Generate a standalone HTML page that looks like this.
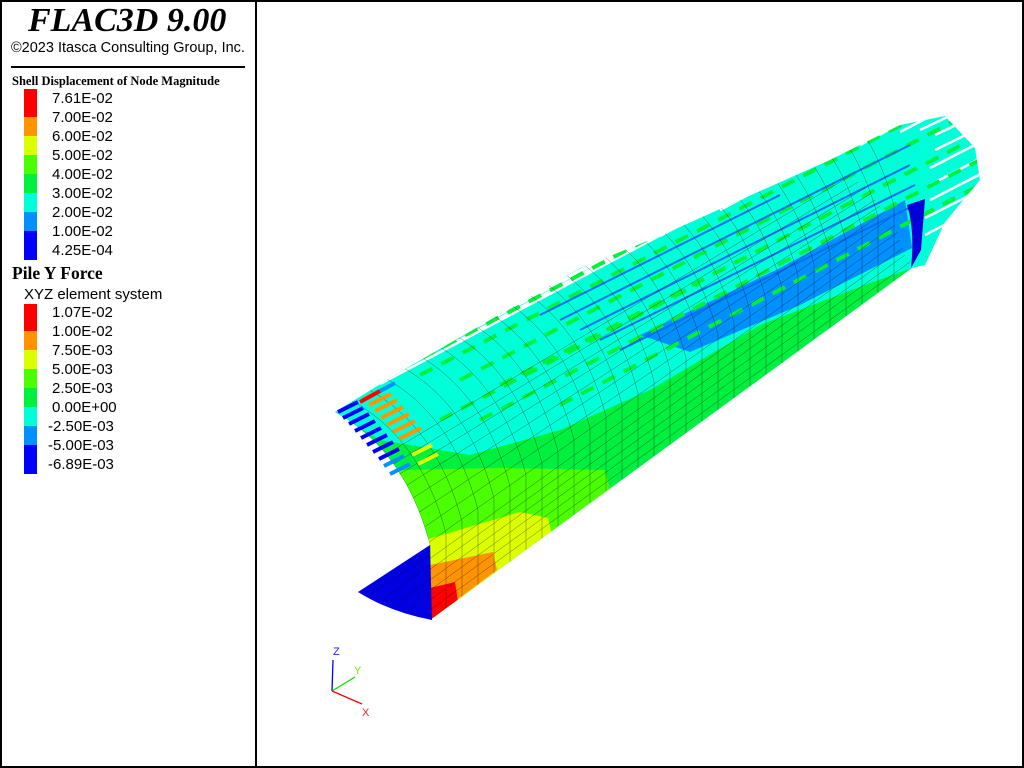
<!DOCTYPE html>
<html><head><meta charset="utf-8"><style>
html,body{margin:0;padding:0;background:#fff}
#w{position:relative;width:1024px;height:768px;overflow:hidden;background:#fff}
.t{position:absolute;font-family:"Liberation Sans",sans-serif;font-size:15px;color:#000;white-space:nowrap;line-height:19px}
.s{position:absolute;left:24px;width:13px}
</style></head><body><div id="w">
<div style="position:absolute;left:0;top:0;width:1020px;height:764px;border:2px solid #000"></div>
<div style="position:absolute;left:255px;top:0;width:2px;height:768px;background:#000"></div>
<div class="t" style="left:28px;top:1px;font-family:'Liberation Serif',serif;font-style:italic;font-weight:bold;font-size:34px;line-height:40px">FLAC3D 9.00</div>
<div class="t" style="left:11px;top:39px;font-size:14.5px;line-height:18px">©2023 Itasca Consulting Group, Inc.</div>
<div style="position:absolute;left:11px;top:66px;width:234px;height:2px;background:#000"></div>
<div class="t" style="left:12px;top:74px;font-family:'Liberation Serif',serif;font-weight:bold;font-size:12.5px;line-height:15px">Shell Displacement of Node Magnitude</div>
<div class="s" style="top:89px;height:28px;background:#ff0000"></div>
<div class="s" style="top:117px;height:19px;background:#ff9400"></div>
<div class="s" style="top:136px;height:19px;background:#dcff00"></div>
<div class="s" style="top:155px;height:19px;background:#4cff00"></div>
<div class="s" style="top:174px;height:19px;background:#00f040"></div>
<div class="s" style="top:193px;height:19px;background:#00ffd8"></div>
<div class="s" style="top:212px;height:19px;background:#0090ff"></div>
<div class="s" style="top:231px;height:29px;background:#0000ff"></div>
<div class="t" style="left:52px;top:89px">7.61E-02</div>
<div class="t" style="left:52px;top:108px">7.00E-02</div>
<div class="t" style="left:52px;top:127px">6.00E-02</div>
<div class="t" style="left:52px;top:146px">5.00E-02</div>
<div class="t" style="left:52px;top:165px">4.00E-02</div>
<div class="t" style="left:52px;top:184px">3.00E-02</div>
<div class="t" style="left:52px;top:203px">2.00E-02</div>
<div class="t" style="left:52px;top:222px">1.00E-02</div>
<div class="t" style="left:52px;top:241px">4.25E-04</div>
<div class="t" style="left:12px;top:262px;font-family:'Liberation Serif',serif;font-weight:bold;font-size:17.5px;line-height:22px">Pile Y Force</div>
<div class="t" style="left:24px;top:285px">XYZ element system</div>
<div class="s" style="top:304px;height:27px;background:#ff0000"></div>
<div class="s" style="top:331px;height:19px;background:#ff9400"></div>
<div class="s" style="top:350px;height:19px;background:#dcff00"></div>
<div class="s" style="top:369px;height:19px;background:#4cff00"></div>
<div class="s" style="top:388px;height:19px;background:#00f040"></div>
<div class="s" style="top:407px;height:19px;background:#00ffd8"></div>
<div class="s" style="top:426px;height:19px;background:#0090ff"></div>
<div class="s" style="top:445px;height:29px;background:#0000ff"></div>
<div class="t" style="left:52px;top:303px">1.07E-02</div>
<div class="t" style="left:52px;top:322px">1.00E-02</div>
<div class="t" style="left:52px;top:341px">7.50E-03</div>
<div class="t" style="left:52px;top:360px">5.00E-03</div>
<div class="t" style="left:52px;top:379px">2.50E-03</div>
<div class="t" style="left:52px;top:398px">0.00E+00</div>
<div class="t" style="left:48px;top:417px">-2.50E-03</div>
<div class="t" style="left:48px;top:436px">-5.00E-03</div>
<div class="t" style="left:48px;top:455px">-6.89E-03</div>

<svg width="1024" height="768" style="position:absolute;left:0;top:0">
<defs>
<clipPath id="body"><path d="M335,412 L400,372 L580,268 L660,236 L740,200 L830,160 L900,125 L945,116 L975,148 L980,180 L945,222 L925,265 L912,268 L430,620 L430,545 Q405,450 335,412 Z"/></clipPath>
</defs>
<g clip-path="url(#body)">
<rect x="300" y="100" width="700" height="540" fill="#00ffd8"/>
<path d="M640,335 L780,268 L905,200 L912,248 L800,305 L690,352 Z" fill="#0090ff"/>
<path d="M335,412 L380,440 L470,455 L560,430 L650,390 L760,325 L870,283 L912,268 L430,620 Z" fill="#00f040"/>
<path d="M395,470 L500,468 L605,470 L610,490 L430,620 Z" fill="#4cff00"/>
<path d="M425,540 L520,512 L548,518 L552,535 L430,620 Z" fill="#dcff00"/>
<path d="M430,565 L493,552 L497,570 L430,620 Z" fill="#ff9400"/>
<path d="M430,588 L455,582 L458,602 L432,620 Z" fill="#ff0000"/>
<g stroke="#fff" stroke-width="2.5">
<line x1="330" y1="405" x2="960" y2="70"/>
<line x1="360" y1="388" x2="990" y2="52"/>
<line x1="380" y1="384" x2="1000" y2="55"/>
<line x1="450" y1="345" x2="1000" y2="50"/>
<line x1="520" y1="302" x2="1000" y2="46"/>
<line x1="600" y1="262" x2="1000" y2="48"/>
<line x1="660" y1="236" x2="1000" y2="54"/>
<line x1="720" y1="210" x2="1000" y2="60"/>
<line x1="780" y1="180" x2="1000" y2="66"/>
<line x1="860" y1="145" x2="1000" y2="72"/>
<line x1="900" y1="132" x2="1000" y2="80"/>
<line x1="920" y1="130" x2="1000" y2="92"/>
<line x1="935" y1="135" x2="1000" y2="104"/>
<line x1="935" y1="150" x2="1000" y2="118"/>
<line x1="930" y1="168" x2="1000" y2="132"/>
<line x1="930" y1="185" x2="1000" y2="148"/>
<line x1="930" y1="200" x2="1000" y2="164"/>
<line x1="925" y1="218" x2="1000" y2="180"/>
<line x1="925" y1="235" x2="1000" y2="196"/>
</g>
<g stroke="#00f040" stroke-width="4" stroke-dasharray="14 10">
<line x1="380" y1="380" x2="900" y2="106"/>
<line x1="420" y1="375" x2="930" y2="110"/>
<line x1="460" y1="380" x2="960" y2="118"/>
<line x1="500" y1="385" x2="975" y2="138"/>
<line x1="480" y1="420" x2="980" y2="160"/>
<line x1="560" y1="405" x2="980" y2="185"/>
<line x1="440" y1="420" x2="700" y2="283"/>
</g>
<g stroke="#0070f0" stroke-width="2">
<line x1="560" y1="320" x2="910" y2="145"/>
<line x1="580" y1="330" x2="910" y2="165"/>
<line x1="600" y1="340" x2="915" y2="185"/>
<line x1="620" y1="350" x2="915" y2="205"/>
<line x1="540" y1="315" x2="780" y2="195"/>
</g>
<g fill="none" stroke="#000" stroke-width="0.5" opacity="0.55">
<path id="r" d="M300,260 Q330,360 335,412 Q405,450 430,545 L430,620"/>
<use href="#r" transform="translate(16,-11.7)"/><use href="#r" transform="translate(32,-23.4)"/>
<use href="#r" transform="translate(48,-35.1)"/><use href="#r" transform="translate(64,-46.8)"/>
<use href="#r" transform="translate(80,-58.5)"/><use href="#r" transform="translate(96,-70.2)"/>
<use href="#r" transform="translate(112,-81.9)"/><use href="#r" transform="translate(128,-93.6)"/>
<use href="#r" transform="translate(144,-105.3)"/><use href="#r" transform="translate(160,-117)"/>
<use href="#r" transform="translate(176,-128.7)"/><use href="#r" transform="translate(192,-140.4)"/>
<use href="#r" transform="translate(208,-152.1)"/><use href="#r" transform="translate(224,-163.8)"/>
<use href="#r" transform="translate(240,-175.5)"/><use href="#r" transform="translate(256,-187.2)"/>
<use href="#r" transform="translate(272,-198.9)"/><use href="#r" transform="translate(288,-210.6)"/>
<use href="#r" transform="translate(304,-222.3)"/><use href="#r" transform="translate(320,-234)"/>
<use href="#r" transform="translate(336,-245.7)"/><use href="#r" transform="translate(352,-257.4)"/>
<use href="#r" transform="translate(368,-269.1)"/><use href="#r" transform="translate(384,-280.8)"/>
<use href="#r" transform="translate(400,-292.5)"/><use href="#r" transform="translate(416,-304.2)"/>
<use href="#r" transform="translate(432,-315.9)"/><use href="#r" transform="translate(448,-327.6)"/>
<use href="#r" transform="translate(464,-339.3)"/>
<path d="M430,610 L910,262 M430,600 L905,255 M430,590 L903,248 M430,580 L900,240 M429,570 L898,232 M428,560 L895,225 M425,545 L890,218 M420,530 L885,212 M415,515 L880,206 M410,500 L875,200 M404,487 L870,194 M398,475 L865,188 M392,465 L858,182 M385,455 L850,176"/>
</g>
</g>
<g stroke-width="4">
<g stroke="#0000ff">
<line x1="338" y1="412" x2="358" y2="402"/><line x1="343" y1="418" x2="363" y2="408"/>
<line x1="349" y1="424" x2="369" y2="414"/><line x1="355" y1="431" x2="375" y2="421"/>
<line x1="361" y1="438" x2="381" y2="428"/><line x1="367" y1="445" x2="387" y2="435"/>
<line x1="373" y1="452" x2="393" y2="442"/><line x1="379" y1="459" x2="399" y2="449"/>
</g>
<g stroke="#ff9400">
<line x1="364" y1="399" x2="386" y2="388"/><line x1="369" y1="405" x2="391" y2="394"/>
<line x1="375" y1="411" x2="397" y2="400"/><line x1="381" y1="418" x2="403" y2="407"/>
<line x1="387" y1="425" x2="409" y2="414"/><line x1="393" y1="432" x2="415" y2="421"/>
<line x1="399" y1="439" x2="421" y2="428"/>
</g>
<line x1="360" y1="402" x2="380" y2="391" stroke="#ff0000"/>
<line x1="380" y1="391" x2="395" y2="383" stroke="#0090ff"/>
<line x1="384" y1="466" x2="404" y2="456" stroke="#0090ff"/>
<line x1="390" y1="474" x2="410" y2="464" stroke="#0090ff"/>
<line x1="412" y1="455" x2="432" y2="445" stroke="#dcff00"/>
<line x1="418" y1="464" x2="438" y2="454" stroke="#dcff00"/>
</g>
<path d="M907,205 L925,199 L921,250 L911,268 Q915,230 907,205 Z" fill="#0000d8"/>
<path d="M358,592 L430,545 L432,620 Q390,612 358,592 Z" fill="#0000e0"/>
<g stroke="#000" stroke-width="0.4" opacity="0.5"><path d="M370,594 L430,555 M382,600 L430,565 M395,606 L430,578 M408,612 L430,592"/></g>
<g stroke-width="1.3" fill="none">
<line x1="332" y1="691" x2="333" y2="660" stroke="#0000ff"/>
<line x1="332" y1="691" x2="355" y2="677" stroke="#00e000"/>
<line x1="332" y1="691" x2="362" y2="704" stroke="#ff0000"/>
</g>
<g font-family="Liberation Sans,sans-serif" font-size="11">
<text x="333" y="655" fill="#2020ff">Z</text>
<text x="354" y="674" fill="#80e020">Y</text>
<text x="362" y="716" fill="#ff2020">X</text>
</g>
</svg>
</div></body></html>
